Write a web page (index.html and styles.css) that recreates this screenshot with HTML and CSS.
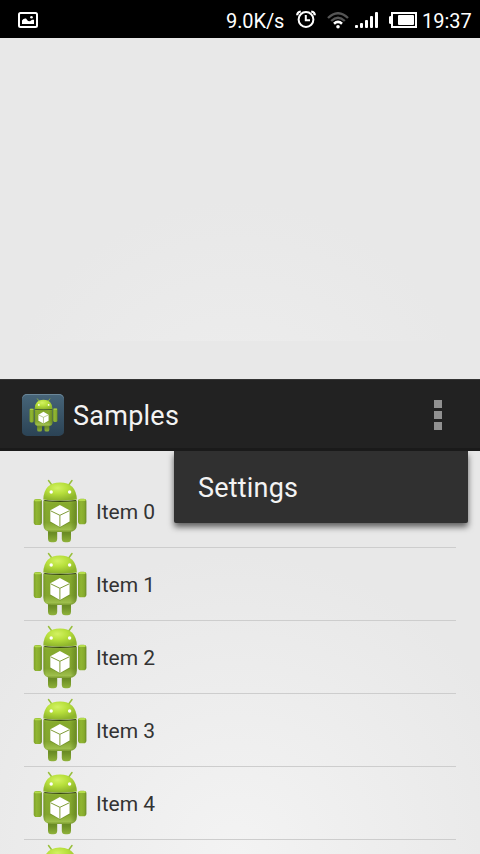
FILE: index.html
```
<!DOCTYPE html>
<html lang="en">
<head>
<meta charset="utf-8">
<title>Samples</title>
<link rel="stylesheet" href="styles.css">
</head>
<body>
<svg class="defs" aria-hidden="true">
  <defs>
    <linearGradient id="arm" x1="0" y1="0" x2="1" y2="0">
      <stop offset="0" stop-color="#7fa02b"/><stop offset=".35" stop-color="#90b632"/><stop offset=".75" stop-color="#86aa2d"/><stop offset="1" stop-color="#688825"/>
    </linearGradient>
    <linearGradient id="leg" x1="0" y1="0" x2="0" y2="1">
      <stop offset="0" stop-color="#5d7c1f"/><stop offset=".5" stop-color="#6f9127"/><stop offset="1" stop-color="#8fb23a"/>
    </linearGradient>
    <linearGradient id="torso" x1="0" y1="0" x2="0" y2="1">
      <stop offset="0" stop-color="#95b93a"/><stop offset=".1" stop-color="#86aa2d"/><stop offset=".7" stop-color="#83a52f"/><stop offset=".92" stop-color="#9ebf4c"/><stop offset="1" stop-color="#7c9c30"/>
    </linearGradient>
    <linearGradient id="edge" x1="0" y1="0" x2="1" y2="0">
      <stop offset="0" stop-color="#56751b" stop-opacity=".35"/><stop offset=".08" stop-color="#56751b" stop-opacity="0"/><stop offset=".8" stop-color="#56751b" stop-opacity="0"/><stop offset="1" stop-color="#56751b" stop-opacity=".6"/>
    </linearGradient>
    <radialGradient id="head" cx=".42" cy=".3" r=".68">
      <stop offset="0" stop-color="#d3f263"/><stop offset=".45" stop-color="#b8e03c"/><stop offset="1" stop-color="#8eb52c"/>
    </radialGradient>
    <symbol id="droid" viewBox="0 0 64 72">
      <path d="M20.500 5.500 24.500 11M44 5.500 40 11" stroke="#98bf3b" stroke-width="1.500" stroke-linecap="round"/>
      <rect x="20" y="52" width="9.200" height="15.200" rx="3.500" fill="url(#leg)"/>
      <rect x="33.800" y="52" width="9.200" height="15.200" rx="3.500" fill="url(#leg)"/>
      <rect x="5.700" y="24" width="8.200" height="26" rx="2.800" fill="url(#arm)"/>
      <path d="M7.200 25.300H12.400" stroke="#b4dc4b" stroke-width="1.800" stroke-linecap="round"/>
      <rect x="50" y="23.700" width="8.400" height="25.500" rx="2.800" fill="url(#arm)"/>
      <path d="M51.600 25H56.800" stroke="#b4dc4b" stroke-width="1.800" stroke-linecap="round"/>
      <path d="M15.400 25.500Q32 27.500 48.800 25.500V49.500Q48.800 57 40.500 57H23.700Q15.400 57 15.400 49.500Z" fill="url(#torso)"/>
      <path d="M15.400 25.500Q32 27.500 48.800 25.500V49.500Q48.800 57 40.500 57H23.700Q15.400 57 15.400 49.500Z" fill="url(#edge)"/>
      <path d="M15.300 24.500Q16 7.500 32 7.500Q48 7.500 48.900 24.500Q32 27 15.300 24.500Z" fill="url(#head)"/>
      <path d="M16.300 25.500Q32 27.200 48 25.500" fill="none" stroke="#37480f" stroke-width="1.100"/>
      <circle cx="23.200" cy="17" r="1.700" fill="#fff"/><circle cx="41.600" cy="17" r="1.700" fill="#fff"/>
      <path d="M32 30.300 42 35.500V47.200L32 52.700 22 47.200V35.500Z" fill="#5f7d20" opacity=".5"/>
      <path d="M31.900 30 41.600 35.300V46.600L31.900 52 22.300 46.600V35.300Z" fill="#fff"/>
      <path d="M22.600 35.800 31.900 40.300 41.300 35.800M31.900 40.300V51.800" fill="none" stroke="#7f9c36" stroke-width="1"/>
    </symbol>
  </defs>
</svg>
<header class="status">
  <svg class="photo" width="20" height="16" viewBox="0 0 20 16"><rect x="1" y="1" width="18" height="14" rx="1.500" fill="none" stroke="#fff" stroke-width="2"/><path d="M4 12V8.500Q5.500 6 8 6.500L10 9 12 9.200 14 7.700H16V12Z" fill="#fff"/><circle cx="13.500" cy="5.300" r="1.300" fill="#fff"/></svg>
  <span class="speed">9.0K/s</span>
  <svg class="alarm" width="20" height="18" viewBox="0 0 20 18" fill="none" stroke="#fff"><circle cx="10" cy="9.500" r="7.400" stroke-width="2"/><path d="M9.800 5V10.200H14" stroke-width="2"/><path d="M1.200 5.200Q1.200 2 4.800 1.500M18.800 5.200Q18.800 2 15.200 1.500" stroke-width="2.200"/></svg>
  <svg class="wifi" width="22" height="17" viewBox="0 0 22 17" fill="none"><path d="M1 6Q11-3.500 21 6M4.200 9Q11 2.500 17.800 9" stroke="#555" stroke-width="2.400"/><path d="M7 11.700Q11 8 15 11.700" stroke="#fff" stroke-width="2.600"/><circle cx="11" cy="14.800" r="1.800" fill="#fff"/></svg>
  <svg class="signal" width="23" height="16" viewBox="0 0 23 16" fill="#fff"><rect y="13" width="3" height="3" rx="1"/><rect x="5" y="11" width="3" height="5" rx="1"/><rect x="10" y="8" width="3" height="8" rx="1"/><rect x="15" y="4" width="3" height="12" rx="1"/><rect x="20" width="3" height="16" rx="1"/></svg>
  <svg class="battery" width="28" height="16" viewBox="0 0 28 16"><rect x="3" y="1" width="24" height="14" fill="none" stroke="#fff" stroke-width="2"/><path d="M0 5Q0 4 2 4V12Q0 12 0 11Z" fill="#fff"/><rect x="9" y="3" width="16" height="10" rx="1" fill="#fff"/></svg>
  <span class="clock">19:37</span>
</header>
<div class="upper"></div>
<nav class="bar">
  <span class="launcher"><svg viewBox="5 4 54 64" width="29" height="34"><use href="#droid" width="64" height="72"/></svg></span>
  <h1 class="title">Samples</h1>
  <span class="overflow"><i></i><i></i><i></i></span>
  <div class="menu"><span>Settings</span></div>
</nav>
<main class="lower">
  <ul class="list">
    <li><svg class="droid"><use href="#droid"/></svg><span>Item 0</span></li>
    <li><svg class="droid"><use href="#droid"/></svg><span>Item 1</span></li>
    <li><svg class="droid"><use href="#droid"/></svg><span>Item 2</span></li>
    <li><svg class="droid"><use href="#droid"/></svg><span>Item 3</span></li>
    <li><svg class="droid"><use href="#droid"/></svg><span>Item 4</span></li>
    <li><svg class="droid"><use href="#droid"/></svg></li>
  </ul>
</main>
</body>
</html>
```
FILE: styles.css
```
* { box-sizing: border-box; }
body {
  margin: 0;
  width: 480px;
  height: 854px;
  overflow: hidden;
  display: flex;
  flex-direction: column;
  background: #e8e8e8;
  font-family: Roboto, "Liberation Sans", sans-serif;
}
.defs { position: absolute; width: 0; height: 0; }
svg { display: block; flex: none; }
.status {
  flex: none;
  height: 38px;
  padding: 0 9px 0 18px;
  display: flex;
  align-items: center;
  background: #000;
  color: #fff;
  font-size: 20px;
  line-height: 24px;
}
.status span { white-space: nowrap; margin-top: 3px; }
.status svg { margin-top: 2px; }
.status .alarm { margin: 0 0 0 11px; }
.speed { width: 59px; margin-left: 188px; letter-spacing: -.1px; }
.wifi { margin-left: 11px; }
.signal { margin-left: 6px; }
.battery { margin-left: 11px; }
.clock { width: 49px; margin-left: 5px; }
.upper {
  flex: none;
  height: 303px;
  margin-bottom: 38px;
  background: radial-gradient(circle at 236px 403px, #eeeeee, #e8e8e8 240px);
}
.bar {
  flex: none;
  position: relative;
  z-index: 1;
  height: 72px;
  padding: 2px 38px 0 22px;
  display: flex;
  align-items: center;
  background: #222;
  border-top: 1px solid #333;
  border-bottom: 3px solid #1a1a1a;
}
.launcher {
  width: 42px;
  height: 42px;
  display: flex;
  align-items: center;
  justify-content: center;
  border-radius: 5px;
  background: linear-gradient(#476579, #2b4355);
  box-shadow: inset 0 1px #6b8799;
}
.title {
  margin: 1px 0 0 9px;
  font-size: 27px;
  line-height: 32px;
  font-weight: 400;
  letter-spacing: .25px;
  color: #f3f3f3;
}
.overflow { margin-left: auto; display: grid; gap: 3px; }
.overflow i { width: 8px; height: 8px; background: #919191; }
.menu {
  position: absolute;
  top: 71px;
  right: 12px;
  width: 294px;
  height: 72px;
  padding: 2px 0 0 24px;
  display: flex;
  align-items: center;
  background: #303030;
  border-radius: 0 0 2px 2px;
  box-shadow: 0 4px 6px rgba(0, 0, 0, .6);
  clip-path: inset(0 -14px -20px -14px);
  color: #f3f3f3;
  font-size: 27px;
  letter-spacing: .2px;
}
.lower {
  flex: none;
  height: 403px;
  overflow: hidden;
  padding: 24px 24px 0;
  background: radial-gradient(circle at 236px 403px, #f3f3f3, #e8e8e8 300px);
}
.list { margin: 0; padding: 0; list-style: none; }
.list li {
  height: 73px;
  padding-left: 4px;
  display: flex;
  align-items: center;
  gap: 4px;
  border-bottom: 1px solid #cdcdcd;
  font-size: 21px;
  color: #333;
}
.list span { padding-top: 2px; }
.droid { width: 64px; height: 72px; }
```
